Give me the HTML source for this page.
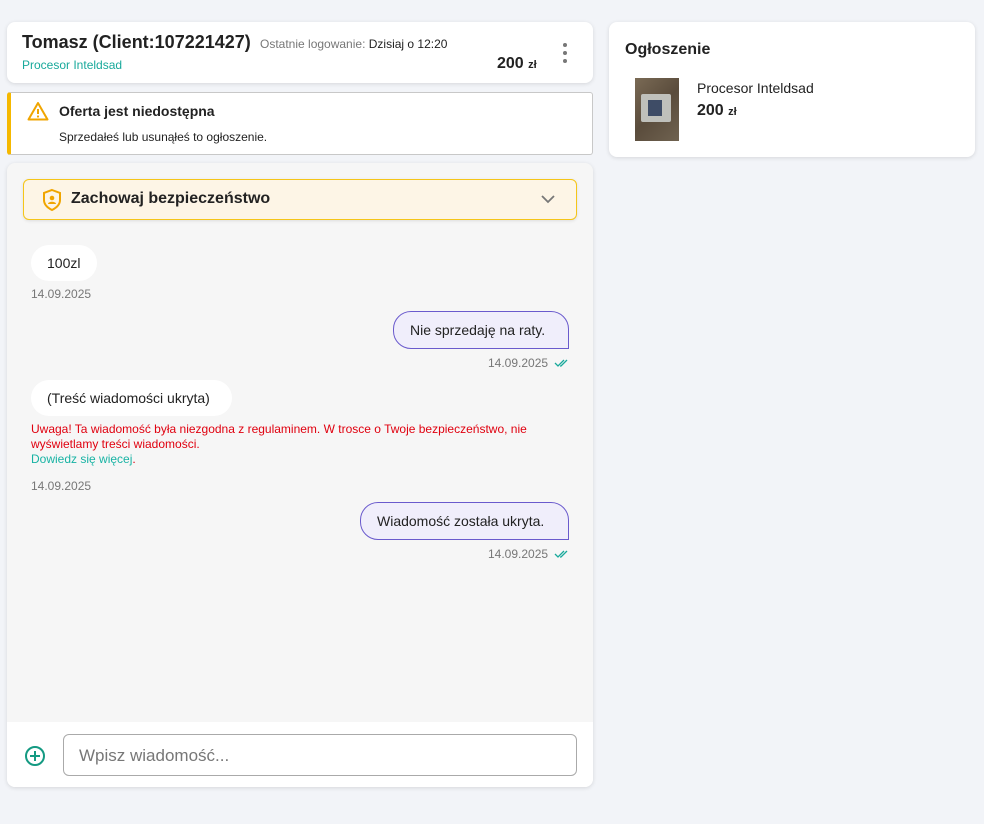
<!DOCTYPE html>
<html><head><meta charset="utf-8">
<style>
*{margin:0;padding:0;box-sizing:border-box}
body{width:984px;height:824px;background:#f2f4f8;font-family:"Liberation Sans",sans-serif;color:#222;position:relative;overflow:hidden}
.abs{position:absolute}
.card{position:absolute;background:#fff;border-radius:8px;box-shadow:0 1px 4px rgba(0,0,0,0.12)}
.t{position:absolute;white-space:nowrap}
.bub{position:absolute;border-radius:18px;font-size:14px;line-height:20px}
.left{background:#fff}
.right{background:#f0eefb;border:1px solid #6a5acd;border-bottom-right-radius:0}
.date{position:absolute;font-size:12px;color:#777;white-space:nowrap}
</style></head><body>

<div class="card" style="left:7px;top:22px;width:586px;height:61px"></div>
<div class="t" style="left:22px;top:32px;font-size:18px;font-weight:bold;color:#222">Tomasz (Client:107221427)</div>
<div class="t" style="left:260px;top:37px;font-size:12px;color:#777">Ostatnie logowanie: <span style="color:#222">Dzisiaj o 12:20</span></div>
<div class="t" style="left:22px;top:58px;font-size:12px;color:#18a99b">Procesor Inteldsad</div>
<div class="t" style="left:497px;top:55px;font-size:16px;font-weight:bold">200 <span style="font-size:11px">zł</span></div>
<div class="abs" style="left:563px;top:43px;width:4px;height:4px;border-radius:2px;background:#777"></div>
<div class="abs" style="left:563px;top:51px;width:4px;height:4px;border-radius:2px;background:#777"></div>
<div class="abs" style="left:563px;top:59px;width:4px;height:4px;border-radius:2px;background:#777"></div>

<div class="abs" style="left:7px;top:92px;width:586px;height:63px;background:#fff;border:1px solid #c8c8c8;border-left:4px solid #f5b800;border-radius:3px"></div>
<svg class="abs" style="left:27px;top:101px" width="22" height="20" viewBox="0 0 22 20"><path d="M11 2 L20.5 18.5 H1.5 Z" fill="none" stroke="#f0a500" stroke-width="2" stroke-linejoin="round"/><path d="M11 8v5" stroke="#f0a500" stroke-width="2"/><circle cx="11" cy="15.5" r="1.1" fill="#f0a500"/></svg>
<div class="t" style="left:59px;top:103px;font-size:14px;font-weight:bold">Oferta jest niedostępna</div>
<div class="t" style="left:59px;top:130px;font-size:12px">Sprzedałeś lub usunąłeś to ogłoszenie.</div>

<div class="abs" style="left:7px;top:163px;width:586px;height:624px;background:#f6f6f6;border-radius:8px;box-shadow:0 1px 4px rgba(0,0,0,0.12);overflow:hidden">
  <div class="abs" style="left:0;top:559px;width:586px;height:65px;background:#fff"></div>
</div>

<div class="abs" style="left:23px;top:179px;width:554px;height:41px;background:#fdf5e6;border:1px solid #f5c518;border-radius:6px;box-shadow:0 1px 3px rgba(0,0,0,0.1)"></div>
<svg class="abs" style="left:41px;top:188px" width="22" height="24" viewBox="0 0 22 24"><path d="M11 2 L19 5 V12 C19 17 15 20 11 22 C7 20 3 17 3 12 V5 Z" fill="none" stroke="#f0a500" stroke-width="2"/><circle cx="11" cy="10" r="2.3" fill="#f0a500"/><path d="M7 16 C7 13 15 13 15 16 Z" fill="#f0a500"/></svg>
<div class="t" style="left:71px;top:190px;font-size:16px;font-weight:bold">Zachowaj bezpieczeństwo</div>
<svg class="abs" style="left:541px;top:194px" width="14" height="10" viewBox="0 0 14 10"><path d="M1 2 L7 8 L13 2" fill="none" stroke="#777" stroke-width="1.8"/></svg>

<div class="bub left" style="left:31px;top:245px;width:66px;height:36px;padding:8px 16px">100zl</div>
<div class="date" style="left:31px;top:287px">14.09.2025</div>

<div class="bub right" style="left:393px;top:311px;width:176px;height:38px;padding:8px 16px">Nie sprzedaję na raty.</div>
<div class="date" style="left:488px;top:356px">14.09.2025</div>
<svg class="abs" style="left:554px;top:358px" width="16" height="10" viewBox="0 0 16 10"><path d="M1 5 L4 8 L10 2 M6 8 L7 8 L13 2" fill="none" stroke="#18a99b" stroke-width="1.3"/></svg>

<div class="bub left" style="left:31px;top:380px;width:201px;height:36px;padding:8px 16px">(Treść wiadomości ukryta)</div>
<div class="t" style="left:31px;top:422px;font-size:12px;line-height:15px;color:#e0000f;white-space:normal;width:540px">Uwaga! Ta wiadomość była niezgodna z regulaminem. W trosce o Twoje bezpieczeństwo, nie wyświetlamy treści wiadomości.<br><span style="color:#18b3a4">Dowiedz się więcej</span>.</div>
<div class="date" style="left:31px;top:479px">14.09.2025</div>

<div class="bub right" style="left:360px;top:502px;width:209px;height:38px;padding:8px 16px">Wiadomość została ukryta.</div>
<div class="date" style="left:488px;top:547px">14.09.2025</div>
<svg class="abs" style="left:554px;top:549px" width="16" height="10" viewBox="0 0 16 10"><path d="M1 5 L4 8 L10 2 M6 8 L7 8 L13 2" fill="none" stroke="#18a99b" stroke-width="1.3"/></svg>

<svg class="abs" style="left:24px;top:745px" width="22" height="22" viewBox="0 0 22 22"><circle cx="11" cy="11" r="9" fill="none" stroke="#149a82" stroke-width="2"/><path d="M11 6v10M6 11h10" stroke="#149a82" stroke-width="2"/></svg>
<div class="abs" style="left:63px;top:734px;width:514px;height:42px;border:1px solid #aaa;border-radius:6px;background:#fff"></div>
<div class="t" style="left:79px;top:746px;font-size:17px;color:#777">Wpisz wiadomość...</div>

<div class="card" style="left:609px;top:22px;width:366px;height:135px"></div>
<div class="t" style="left:625px;top:41px;font-size:16px;font-weight:bold;color:#222">Ogłoszenie</div>
<div class="abs" style="left:635px;top:78px;width:44px;height:63px;background:linear-gradient(135deg,#7a6a55,#5a4c3c 50%,#6f6250);">
  <div class="abs" style="left:6px;top:16px;width:30px;height:28px;background:#bfc0bb;border-radius:2px"></div>
  <div class="abs" style="left:13px;top:22px;width:14px;height:16px;background:#3e4c66"></div>
</div>
<div class="t" style="left:697px;top:80px;font-size:14px">Procesor Inteldsad</div>
<div class="t" style="left:697px;top:102px;font-size:16px;font-weight:bold">200 <span style="font-size:11px">zł</span></div>

</body></html>
